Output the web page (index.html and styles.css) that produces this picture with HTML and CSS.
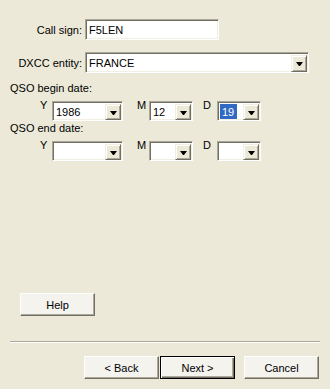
FILE: index.html
```html
<!DOCTYPE html>
<html lang="en">
<head>
  <meta charset="UTF-8">
  <meta name="viewport" content="width=device-width, initial-scale=1">
  <title>QSO wizard</title>
  <link rel="stylesheet" href="styles.css">
</head>
<body>
  <div class="dialog">
    <div class="form">
      <div class="field-row">
        <label class="field-label">Call sign:</label>
        <div class="textbox call-input"><span class="value">F5LEN</span></div>
      </div>

      <div class="field-row dxcc-row">
        <label class="field-label">DXCC entity:</label>
        <div class="combo dxcc-combo">
          <span class="value">FRANCE</span>
          <span class="drop-btn"><i class="arrow"></i></span>
        </div>
      </div>

      <div class="group-label begin-label">QSO begin date:</div>
      <div class="date-row">
        <div class="date-part">
          <span class="date-lbl">Y</span>
          <div class="combo year"><span class="value">1986</span><span class="drop-btn"><i class="arrow"></i></span></div>
        </div>
        <div class="date-part part-m">
          <span class="date-lbl">M</span>
          <div class="combo small"><span class="value">12</span><span class="drop-btn"><i class="arrow"></i></span></div>
        </div>
        <div class="date-part part-d">
          <span class="date-lbl">D</span>
          <div class="combo small"><span class="value"><span class="selected">19</span></span><span class="drop-btn"><i class="arrow"></i></span></div>
        </div>
      </div>

      <div class="group-label end-label">QSO end date:</div>
      <div class="date-row">
        <div class="date-part">
          <span class="date-lbl">Y</span>
          <div class="combo year"><span class="value"></span><span class="drop-btn"><i class="arrow"></i></span></div>
        </div>
        <div class="date-part part-m">
          <span class="date-lbl">M</span>
          <div class="combo small"><span class="value"></span><span class="drop-btn"><i class="arrow"></i></span></div>
        </div>
        <div class="date-part part-d">
          <span class="date-lbl">D</span>
          <div class="combo small"><span class="value"></span><span class="drop-btn"><i class="arrow"></i></span></div>
        </div>
      </div>
    </div>

    <div class="footer">
      <button class="btn help-btn">Help</button>
      <div class="separator"></div>
      <div class="nav-buttons">
        <button class="btn">&lt; Back</button>
        <button class="btn default-btn">Next &gt;</button>
        <button class="btn cancel-btn">Cancel</button>
      </div>
    </div>
  </div>
</body>
</html>
```

FILE: styles.css
```css
body {
  margin: 0;
  background: #ece9d8;
  font-family: 'Liberation Sans', Arial, sans-serif;
  font-size: 11px;
  color: #000;
}
.dialog {
  width: 330px;
  height: 389px;
  display: flex;
  flex-direction: column;
  box-sizing: border-box;
  padding-bottom: 10px;
}
.form {
  padding-top: 19px;
}
.field-row {
  display: flex;
  align-items: center;
}
.field-label {
  width: 85px;
  text-align: right;
  padding-right: 3px;
  box-sizing: border-box;
}
.dxcc-row {
  margin-top: 12px;
}
.textbox, .combo {
  height: 21px;
  box-sizing: border-box;
  border: 1px solid;
  border-color: #aca899 #fff #fff #aca899;
  box-shadow: inset 1px 1px #716f64, inset -1px -1px #f1efe2;
  padding: 2px 1px 1px 2px;
  background: #fff;
  display: flex;
}
.call-input {
  width: 134px;
}
.dxcc-combo {
  width: 224px;
}
.value {
  flex: 1;
  line-height: 17px;
  padding-left: 1px;
  white-space: nowrap;
  overflow: hidden;
}
.selected {
  background: #316ac5;
  color: #fff;
  display: inline-block;
  margin-left: -1px;
  padding: 0 3px 0 2px;
}
.drop-btn {
  width: 16px;
  height: 17px;
  box-sizing: border-box;
  background: #ece9d8;
  border: 1px solid;
  border-color: #f1efe2 #716f64 #716f64 #f1efe2;
  box-shadow: inset 1px 1px #fff, inset -1px -1px #aca899;
  display: flex;
  align-items: center;
  justify-content: center;
}
.arrow {
  width: 1px;
  height: 0;
  border-left: 3px solid transparent;
  border-right: 3px solid transparent;
  border-top: 4px solid #000;
  margin-top: 1px;
}
.group-label {
  padding-left: 10px;
  line-height: 13px;
}
.begin-label {
  margin-top: 9px;
}
.end-label {
  margin-top: 1px;
}
.date-row {
  display: flex;
  padding-left: 40px;
  margin-top: 2px;
}
.date-part {
  display: flex;
  align-items: flex-start;
}
.date-lbl {
  width: 12px;
  line-height: 13px;
  padding-top: 2px;
}
.date-part .combo {
  margin-top: 4px;
  height: 20px;
}
.date-part .drop-btn {
  height: 16px;
}
.date-part .value {
  line-height: 16px;
}
.year {
  width: 71px;
}
.small {
  width: 44px;
}
.part-m {
  margin-left: 14px;
}
.part-d {
  margin-left: 10px;
}
.part-d .date-lbl {
  width: 14px;
}
.footer {
  margin-top: auto;
}
.btn {
  width: 75px;
  height: 23px;
  font-family: inherit;
  font-size: 11px;
  color: #000;
  background: #f4f3ee;
  border: 1px solid;
  border-color: #fff #716f64 #716f64 #fff;
  box-shadow: inset -1px -1px #aca899;
  padding: 0;
  margin: 0;
  cursor: pointer;
}
.help-btn {
  margin-left: 20px;
  display: block;
}
.separator {
  margin: 25px 10px 0 10px;
  border-top: 1px solid #aca899;
  border-bottom: 1px solid #fff;
}
.nav-buttons {
  display: flex;
  padding-left: 84px;
  margin-top: 13px;
}
.default-btn {
  margin-left: 1px;
  border: 1px solid #000;
  box-shadow: inset 1px 1px #fff, inset -1px -1px #716f64, inset -2px -2px #aca899;
}
.cancel-btn {
  margin-left: 9px;
}
```
